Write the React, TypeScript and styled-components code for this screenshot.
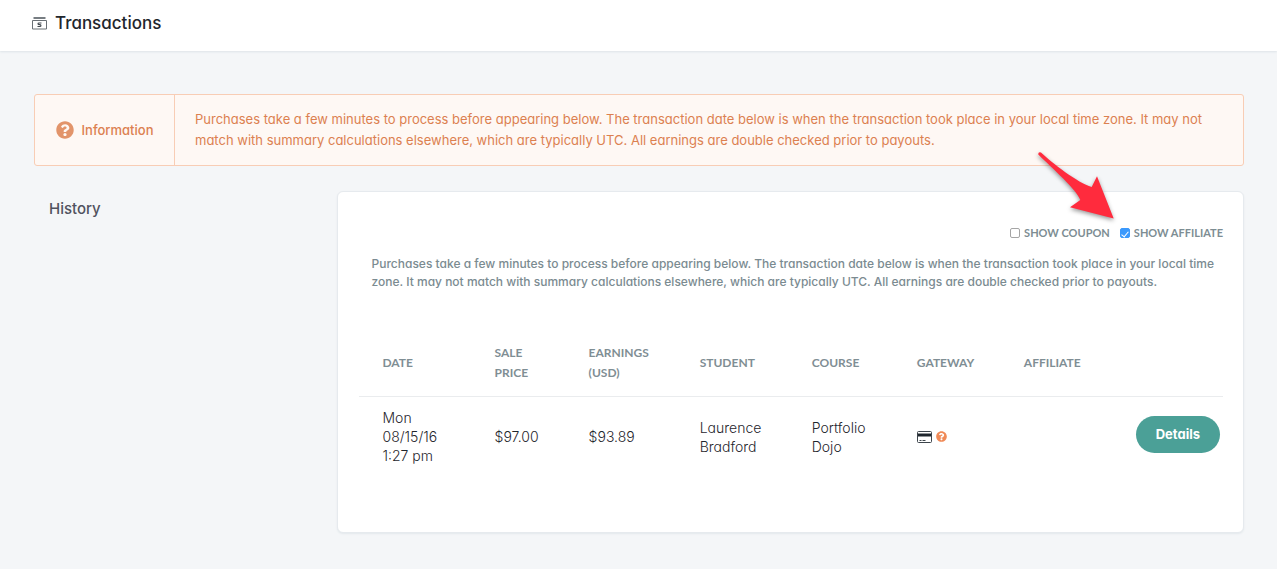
import React, { useState } from "react";
import styled, { createGlobalStyle } from "styled-components";
import { FaQuestionCircle } from "react-icons/fa";

const GlobalStyle = createGlobalStyle`
  *, *::before, *::after { box-sizing: border-box; }
  body {
    margin: 0;
    background: #f4f6f8;
    color: #1f262d;
    font-family: Inter, Lato, "Liberation Sans", sans-serif;
    font-feature-settings: "cv11" 1;
    font-size: 14px;
  }
`;

const TopBar = styled.header`
  display: flex;
  align-items: center;
  gap: 8px;
  height: 51px;
  padding: 0 32px 5px;
  background: #fff;
  box-shadow: 0 1px 2px #dde3e8;
`;

const PageTitle = styled.h1`
  margin: 0;
  font-size: 17px;
  line-height: 24px;
  font-weight: 500;
`;

const Content = styled.main`
  padding: 43px 33px 36px 34px;
`;

const Banner = styled.section`
  display: flex;
  border: 1px solid #f8cdb5;
  border-radius: 3px;
  background: #fef8f4;
  color: #dc8050;
  font-size: 13px;
  font-weight: 400;
`;

const BannerLabel = styled.div`
  display: flex;
  flex: none;
  align-items: center;
  justify-content: center;
  gap: 8px;
  width: 140px;
  border-right: 1px solid #f8cdb5;
  font-weight: 500;
`;

const BannerText = styled.p`
  margin: 0;
  padding: 14px 20px;
  line-height: 21px;
`;

const Columns = styled.div`
  display: grid;
  grid-template-columns: minmax(0, 1fr) minmax(0, 3fr);
  margin-top: 25px;
`;

const Side = styled.div`
  padding: 6px 15px;
`;

const SideTitle = styled.h2`
  margin: 0;
  color: #50525f;
  font-size: 15px;
  line-height: 24px;
  font-weight: 500;
`;

const Card = styled.section`
  padding: 32px 20px 56px 21px;
  border: 1px solid #e6eaee;
  border-radius: 6px;
  background: #fff;
  box-shadow: 0 1px 2px #e3e8ec;
`;

const Options = styled.div`
  position: relative;
  display: flex;
  justify-content: flex-end;
  gap: 10px;
`;

const Option = styled.label`
  display: flex;
  align-items: center;
  gap: 4px;
  color: #7d8d93;
  font-family: Lato, "Liberation Sans", sans-serif;
  font-size: 11px;
  line-height: 18px;
  font-weight: 700;
  text-transform: uppercase;
`;

const Tick = styled.input`
  appearance: none;
  display: grid;
  place-items: center;
  width: 10px;
  height: 10px;
  margin: 0;
  border: 1px solid #a5a5a5;
  border-radius: 2px;
  background: #fff;

  &:checked {
    border-color: #3b99fc;
    background: #3b99fc;
  }

  &:checked::before {
    content: "";
    width: 4px;
    height: 7px;
    border: solid #fff;
    border-width: 0 1px 1px 0;
    transform: rotate(40deg);
  }
`;

const Pointer = styled.svg`
  position: absolute;
  right: 104px;
  bottom: 19px;
  overflow: visible;
  filter: drop-shadow(0 2px 2px rgba(0, 0, 0, 0.4));
  pointer-events: none;
`;

const Note = styled.p`
  margin: 13px 0 52px 13px;
  color: #7b8b91;
  font-size: 12px;
  line-height: 18px;
  font-weight: 500;
`;

const Table = styled.table`
  width: 100%;
  table-layout: fixed;
  border-collapse: collapse;
`;

const HeadCell = styled.th<{ $width: number }>`
  width: ${(p) => p.$width}px;
  padding: 0 20px 13px 24px;
  border-bottom: 1px solid #eaecee;
  color: #7f8e94;
  font-family: Lato, "Liberation Sans", sans-serif;
  font-size: 12px;
  line-height: 20px;
  font-weight: 700;
  text-align: left;
  text-transform: uppercase;
`;

const Cell = styled.td`
  padding: 11px 16px 11px 24px;
  font-size: 14px;
  line-height: 19px;
  font-weight: 300;
`;

const ActionCell = styled(Cell)`
  padding: 8px 3px 12px 0;
  text-align: right;
`;

const Gateway = styled.div`
  display: flex;
  align-items: center;
  gap: 4px;
`;

const DetailsButton = styled.button`
  height: 37px;
  padding: 0 20px;
  border: 0;
  border-radius: 19px;
  background: #4ba097;
  color: #fff;
  font: inherit;
  font-size: 13px;
  font-weight: 700;
`;

const CashIcon = () => (
  <svg width="15" height="13" viewBox="0 0 15 13" fill="none" aria-hidden="true">
    <path d="M1.500 1h12" stroke="#777d82" strokeWidth="2" />
    <path d="M.5 3.500h14v8.500H.5z" stroke="#6a7075" />
    <path d="M9.500 6H7c-1.300 0-1.300 1.700 0 1.700h1c1.200 0 1.200 1.800 0 1.800H5.500" stroke="#444b51" strokeWidth="1.200" />
  </svg>
);

const CardIcon = () => (
  <svg width="15" height="12" viewBox="0 0 15 12" fill="none" aria-hidden="true">
    <rect x=".5" y=".5" width="14" height="11" rx="1" stroke="#3c444b" />
    <path d="M1 2.500h13v3H1z" fill="#1f262d" />
    <path d="M2.500 9.500h2M5.500 9.500h3" stroke="#3c444b" />
  </svg>
);

const NOTICE =
  "Purchases take a few minutes to process before appearing below. The transaction date below is when the transaction took place in your local time zone. It may not match with summary calculations elsewhere, which are typically UTC. All earnings are double checked prior to payouts.";

const HEADINGS = [
  { label: "Date", width: 112 },
  { label: "Sale Price", width: 94 },
  { label: "Earnings (USD)", width: 111 },
  { label: "Student", width: 112 },
  { label: "Course", width: 105 },
  { label: "Gateway", width: 107 },
  { label: "Affiliate", width: 112 },
  { label: "", width: 111 },
];

export default function App() {
  const [coupon, setCoupon] = useState(false);
  const [affiliate, setAffiliate] = useState(true);

  return (
    <>
      <GlobalStyle />
      <TopBar>
        <CashIcon />
        <PageTitle>Transactions</PageTitle>
      </TopBar>
      <Content>
        <Banner>
          <BannerLabel>
            <FaQuestionCircle size={18} color="#e2946a" />
            Information
          </BannerLabel>
          <BannerText>{NOTICE}</BannerText>
        </Banner>
        <Columns>
          <Side>
            <SideTitle>History</SideTitle>
          </Side>
          <Card>
            <Options>
              <Option>
                <Tick type="checkbox" checked={coupon} onChange={(e) => setCoupon(e.target.checked)} />
                Show coupon
              </Option>
              <Option>
                <Tick type="checkbox" checked={affiliate} onChange={(e) => setAffiliate(e.target.checked)} />
                Show affiliate
              </Option>
              <Pointer width="84" height="74" viewBox="0 0 84 74" aria-hidden="true">
                <path
                  d="M6 3.500C17 14 43 34 56.700 38L62 27.300 78.700 69.500 35 58.200 45.300 51C42 41 17 19 3.300 5.500Q3 2.500 6 3.500Z"
                  fill="#ff2b3d"
                />
              </Pointer>
            </Options>
            <Note>{NOTICE}</Note>
            <Table>
              <thead>
                <tr>
                  {HEADINGS.map((h) => (
                    <HeadCell key={h.label} $width={h.width} scope="col">
                      {h.label}
                    </HeadCell>
                  ))}
                </tr>
              </thead>
              <tbody>
                <tr>
                  <Cell>Mon 08/15/16 1:27 pm</Cell>
                  <Cell>$97.00</Cell>
                  <Cell>$93.89</Cell>
                  <Cell>Laurence Bradford</Cell>
                  <Cell>Portfolio Dojo</Cell>
                  <Cell>
                    <Gateway>
                      <CardIcon />
                      <FaQuestionCircle size={11} color="#f08a57" />
                    </Gateway>
                  </Cell>
                  <Cell />
                  <ActionCell>
                    <DetailsButton type="button">Details</DetailsButton>
                  </ActionCell>
                </tr>
              </tbody>
            </Table>
          </Card>
        </Columns>
      </Content>
    </>
  );
}
